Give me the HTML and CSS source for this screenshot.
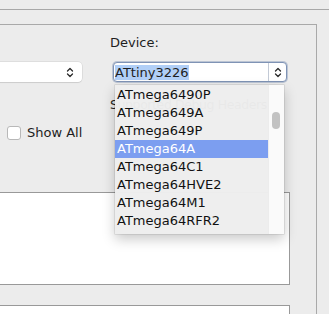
FILE: index.html
```html
<!DOCTYPE html>
<html>
<head>
<meta charset="utf-8">
<link rel="stylesheet" href="styles.css">
</head>
<body>
<div class="topbar"></div>
<div class="group">
  <div class="fields">
    <div class="col-left">
      <div class="combo combo-left">
        <span class="combo-field"></span>
        <span class="chev"><svg width="8" height="11" viewBox="0 0 8 11"><path d="M1.5 4 L4 1.5 L6.5 4 M1.5 7 L4 9.5 L6.5 7" fill="none" stroke="#2a2a2a" stroke-width="1.3" stroke-linecap="round" stroke-linejoin="round"/></svg></span>
      </div>
      <label class="check-row"><span class="checkbox"></span><span class="check-label">Show All</span></label>
    </div>
    <div class="col-right">
      <div class="label">Device:</div>
      <div class="combo combo-right">
        <span class="combo-field"><span class="sel-text">ATtiny3226</span></span>
        <span class="combo-btn"><svg width="8" height="11" viewBox="0 0 8 11"><path d="M1.5 4 L4 1.5 L6.5 4 M1.5 7 L4 9.5 L6.5 7" fill="none" stroke="#2a2a2a" stroke-width="1.3" stroke-linecap="round" stroke-linejoin="round"/></svg></span>
      </div>
      <div class="label label-sub">Supported Debug Headers:</div>
    </div>
  </div>
  <div class="panel panel-1"></div>
  <div class="panel panel-2"></div>
</div>
<div class="dropdown">
  <ul class="items">
    <li>ATmega6490P</li>
    <li>ATmega649A</li>
    <li>ATmega649P</li>
    <li class="active">ATmega64A</li>
    <li>ATmega64C1</li>
    <li>ATmega64HVE2</li>
    <li>ATmega64M1</li>
    <li>ATmega64RFR2</li>
  </ul>
  <div class="scroll"><div class="thumb"></div></div>
</div>
</body>
</html>
```
FILE: styles.css
```css
html, body {
  margin: 0;
  padding: 0;
}
body {
  width: 329px;
  height: 314px;
  overflow: hidden;
  background: #ececec;
  font-family: "DejaVu Sans", sans-serif;
  font-size: 13px;
  color: #1e1e1e;
  position: relative;
}
.topbar {
  height: 9px;
  border-bottom: 1px solid #a8a8a8;
}
.group {
  margin: 14px 12px 0 -10px;
  padding: 10px 0 0 10px;
  border-top: 1px solid #a9a9a9;
  border-right: 1px solid #a9a9a9;
  height: 279px;
  overflow: hidden;
}
.fields {
  display: flex;
  gap: 31px;
  height: 105px;
}
.col-left {
  width: 82px;
  display: flex;
  flex-direction: column;
}
.col-right {
  width: 174px;
  display: flex;
  flex-direction: column;
}
.combo {
  height: 20px;
  box-sizing: border-box;
  display: flex;
  background: #fff;
}
.combo-left {
  margin: 27px 0 0 -5px;
  width: 87px;
  border-radius: 0 4px 4px 0;
  box-shadow: 0 0 0 0.5px rgba(0,0,0,0.12), 0 1px 1px rgba(0,0,0,0.08);
}
.combo-field {
  flex: 1;
  display: flex;
  align-items: center;
}
.chev {
  width: 16px;
  display: flex;
  align-items: center;
  justify-content: flex-start;
}
.check-row {
  margin-top: 44px;
  display: flex;
  align-items: center;
  gap: 6px;
  height: 14px;
  margin-left: 7px;
  white-space: nowrap;
}
.checkbox {
  flex: none;
  width: 12px;
  height: 12px;
  background: #fff;
  border: 1px solid #b8b8b8;
  border-radius: 3px;
}
.check-label {
  line-height: 14px;
}
.label {
  line-height: 16px;
  margin-left: -3px;
  white-space: nowrap;
}
.combo-right {
  margin-top: 11px;
  border: 1px solid #7f93b5;
  border-radius: 4px;
  box-shadow: 0 0 0 1px rgba(130,150,185,0.45);
}
.combo-right .combo-field {
  padding-left: 1px;
}
.sel-text {
  background: #b1cff7;
  line-height: 15px;
}
.combo-btn {
  width: 17px;
  border-left: 1px solid #c3cad6;
  display: flex;
  align-items: center;
  justify-content: center;
}
.label-sub {
  margin-top: 15px;
  font-size: 12.5px;
  letter-spacing: -0.4px;
}
.panel {
  background: #fff;
  border: 1px solid #999;
  margin-left: -5px;
  width: 295px;
  box-sizing: border-box;
}
.panel-1 {
  margin-top: 52px;
  height: 93px;
}
.panel-2 {
  margin-top: 20px;
  height: 30px;
}
.dropdown {
  position: absolute;
  left: 115px;
  top: 85px;
  width: 169px;
  height: 149px;
  background: rgba(238,238,238,0.975);
  box-shadow: 0 0 0 0.5px rgba(0,0,0,0.15), 0 5px 12px rgba(0,0,0,0.22);
  display: flex;
}
.items {
  list-style: none;
  margin: 0;
  padding: 1px 0 0;
  flex: 1;
}
.items li {
  height: 18px;
  line-height: 18px;
  padding-left: 2px;
  color: #111;
}
.items li.active {
  background: #7c9ef0;
  color: #fff;
}
.scroll {
  width: 15px;
  background: rgba(250,250,250,0.96);
  border-left: 1px solid #ececec;
  position: relative;
}
.thumb {
  position: absolute;
  left: 3px;
  top: 27px;
  width: 8px;
  height: 17px;
  border-radius: 4px;
  background: #c2c2c2;
}
```
